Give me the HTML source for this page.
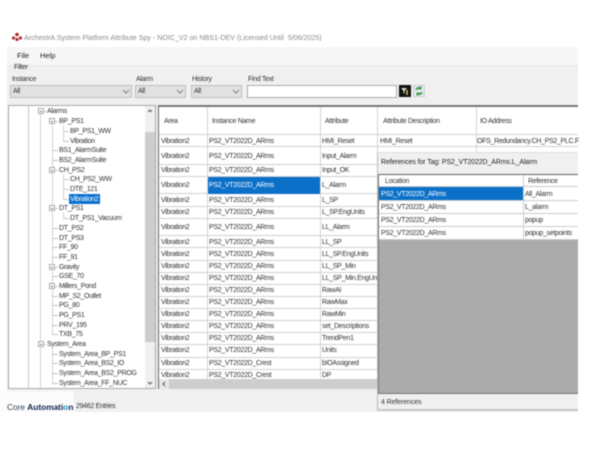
<!DOCTYPE html>
<html><head><meta charset="utf-8"><style>
html,body{margin:0;padding:0;width:600px;height:450px;overflow:hidden;background:#fff}
#r{position:absolute;left:0;top:0;width:600px;height:450px;font:7px/10px "Liberation Sans",sans-serif;letter-spacing:-.3px;color:#333;filter:blur(.4px);overflow:hidden}
#r div{position:absolute;box-sizing:border-box}
.t{white-space:nowrap;margin-top:1px}
.cb{background:#e1e1e1;border:1px solid #bdbdbd;height:13px;padding-left:2px;line-height:12px}
.exp{width:6px;height:6px;border:1px solid #aaa;background:#fff}
.exp:after{content:"";position:absolute;left:1px;top:1.5px;width:2px;height:1px;background:#666}
</style></head><body><div id="r">
<svg style="position:absolute;left:11px;top:32px" width="12" height="10" viewBox="0 0 12 10"><g fill="#b02a35"><circle cx="2.5" cy="6" r="1.6"/><circle cx="6" cy="2.5" r="1.8"/><circle cx="9.5" cy="6" r="1.6"/><circle cx="6" cy="7.5" r="1.6"/></g></svg>
<div class="t" style="left:24px;top:32px;color:#8a8a8a;font-size:7.1px;letter-spacing:0">ArchestrA System Platform Attribute Spy - NOIC_V2 on NBS1-DEV (Licensed Until&nbsp; 5/06/2025)</div>

<div style="left:7px;top:47px;width:571px;height:365px;background:#f0f0f0"></div>
<div style="left:7px;top:47px;width:571px;height:19px;background:#f6f6f6;border-bottom:1px solid #e6e6e6"></div>
<div class="t" style="left:17px;top:50px;font-size:7.5px;letter-spacing:0;color:#222">File</div>
<div class="t" style="left:40px;top:50px;font-size:7.5px;letter-spacing:0;color:#222">Help</div>
<div class="t" style="left:14px;top:62px">Filter</div>
<div class="t" style="left:12px;top:74px">Instance</div>
<div class="t" style="left:136px;top:74px">Alarm</div>
<div class="t" style="left:192px;top:74px">History</div>
<div class="t" style="left:248px;top:74px">Find Text</div>
<div class="cb" style="left:10px;top:85px;width:122px">All</div>
<div class="cb" style="left:135px;top:85px;width:51px">All</div>
<div class="cb" style="left:191px;top:85px;width:51px">All</div>
<svg style="position:absolute;left:0;top:0" width="600" height="450"><g fill="none" stroke="#666" stroke-width=".8"><path d="M123 90l3 3 3-3M177 90l3 3 3-3M233 90l3 3 3-3"/></g></svg>
<div style="left:247px;top:85px;width:150px;height:13px;background:#fff;border:1px solid #aaa"></div>
<div style="left:399px;top:85px;width:12px;height:12px;background:#111"></div>
<svg style="position:absolute;left:399px;top:85px" width="12" height="12"><path d="M2 3h6L5.500 6v3L4.500 8V6z" fill="#ddd"/><path d="M8 5v5" stroke="#cc3" stroke-width="1.500"/></svg>
<div style="left:413px;top:85px;width:12px;height:12px;background:#e4eaf2;border:1px solid #c8d0da"></div>
<svg style="position:absolute;left:413px;top:85px" width="12" height="12" fill="none" stroke="#3a9a3a" stroke-width="1.500"><path d="M3 5a3 3 0 0 1 5-1.500M9 7a3 3 0 0 1-5 1.500"/><path d="M8 1v3H5M4 11V8h3" stroke-width="1"/></svg>

<div style="left:8px;top:105px;width:148px;height:284px;background:#fff;border:1px solid #a8a8a8"></div>
<div style="left:28px;top:106px;width:1px;height:282px;background:#c4c4c4"></div>
<div style="left:40px;top:114px;width:1px;height:227px;background:#d4d4d4"></div>
<div style="left:40px;top:347px;width:1px;height:41px;background:#d4d4d4"></div>
<div style="left:52px;top:124px;width:1px;height:210px;background:#d4d4d4"></div>
<div style="left:52px;top:348px;width:1px;height:36px;background:#d4d4d4"></div>
<div style="left:63px;top:125px;width:1px;height:16px;background:#d4d4d4"></div>
<div style="left:63px;top:174px;width:1px;height:25px;background:#d4d4d4"></div>
<div style="left:63px;top:212px;width:1px;height:6px;background:#d4d4d4"></div>
<svg style="position:absolute;left:0;top:0" width="600" height="450"><path stroke="#c4c4c4" stroke-width="1" d="M52 150.500h6M52 160.500h6M52 228.500h6M52 238.500h6M52 247.500h6M52 257.500h6M52 276.500h6M52 296.500h6M52 305.500h6M52 315.500h6M52 325.500h6M52 334.500h6M52 354.500h6M52 363.500h6M52 373.500h6M52 383.500h6M63 131.500h6M63 141.500h6M63 179.500h6M63 189.500h6M63 199.500h5M63 218.500h6M43 111.500h3M54 121.500h4M54 170.500h4M54 208.500h4M54 267.500h4M54 286.500h4M43 344.500h3"/></svg>
<div class="exp" style="left:38px;top:108px"></div>
<div class="exp" style="left:49px;top:118px"></div>
<div class="exp" style="left:49px;top:167px"></div>
<div class="exp" style="left:49px;top:205px"></div>
<div class="exp" style="left:49px;top:264px"></div>
<div class="exp" style="left:49px;top:283px"></div>
<div class="exp" style="left:38px;top:341px"></div>

<div class="t" style="left:47px;top:106px">Alarms</div>
<div class="t" style="left:59px;top:116px">BP_PS1</div>
<div class="t" style="left:70px;top:126px">BP_PS1_WW</div>
<div class="t" style="left:70px;top:136px">Vibration</div>
<div class="t" style="left:59px;top:145px">BS1_AlarmSuite</div>
<div class="t" style="left:59px;top:155px">BS2_AlarmSuite</div>
<div class="t" style="left:59px;top:165px">CH_PS2</div>
<div class="t" style="left:70px;top:174px">CH_PS2_WW</div>
<div class="t" style="left:70px;top:184px">DTE_121</div>
<div style="left:69px;top:194px;width:31px;height:10px;background:#0a70d0"></div>
<div class="t" style="left:70px;top:194px;color:#fff">Vibration2</div>
<div class="t" style="left:59px;top:203px">DT_PS1</div>
<div class="t" style="left:70px;top:213px">DT_PS1_Vacuum</div>
<div class="t" style="left:59px;top:223px">DT_PS2</div>
<div class="t" style="left:59px;top:233px">DT_PS3</div>
<div class="t" style="left:59px;top:242px">FF_90</div>
<div class="t" style="left:59px;top:252px">FF_91</div>
<div class="t" style="left:59px;top:262px">Gravity</div>
<div class="t" style="left:59px;top:271px">GSE_70</div>
<div class="t" style="left:59px;top:281px">Millers_Pond</div>
<div class="t" style="left:59px;top:291px">MP_S2_Outlet</div>
<div class="t" style="left:59px;top:300px">PG_80</div>
<div class="t" style="left:59px;top:310px">PG_PS1</div>
<div class="t" style="left:59px;top:320px">PRV_195</div>
<div class="t" style="left:59px;top:329px">TXB_75</div>
<div class="t" style="left:47px;top:339px">System_Area</div>
<div class="t" style="left:59px;top:349px">System_Area_BP_PS1</div>
<div class="t" style="left:59px;top:358px">System_Area_BS2_IO</div>
<div class="t" style="left:59px;top:368px">System_Area_BS2_PROG</div>
<div class="t" style="left:59px;top:378px">System_Area_FF_NUC</div>

<div style="left:145px;top:106px;width:10px;height:282px;background:#f0f0f0"></div>
<div style="left:145px;top:132px;width:10px;height:210px;background:#cdcdcd"></div>
<svg style="position:absolute;left:0;top:0" width="600" height="450" fill="none" stroke="#555"><path d="M148 112l2-2 2 2M148 382l2 2 2-2"/></svg>

<div style="left:158px;top:105px;width:420px;height:284px;background:#fff;border-left:1px solid #666;border-top:2px solid #777;border-bottom:1px solid #666"></div>
<div class="t" style="left:164px;top:116px">Area</div>
<div class="t" style="left:212px;top:116px">Instance Name</div>
<div class="t" style="left:325px;top:116px">Attribute</div>
<div class="t" style="left:383px;top:116px">Attribute Description</div>
<div class="t" style="left:480px;top:116px">IO Address</div>
<div style="left:207px;top:107px;width:1px;height:273px;background:#d5d5d5"></div>
<div style="left:320px;top:107px;width:1px;height:273px;background:#d5d5d5"></div>
<div style="left:377px;top:107px;width:1px;height:45px;background:#d5d5d5"></div>
<div style="left:476px;top:107px;width:1px;height:45px;background:#d5d5d5"></div>
<svg style="position:absolute;left:0;top:0" width="600" height="450"><path stroke="#d0d0d0" d="M159 134.500H578M159 146.500H578M159 164.500H378M159 176.500H378M159 193.500H378M159 206.500H378M159 218.500H378M159 235.500H378M159 247.500H378M159 260.500H378M159 272.500H378M159 284.500H378M159 296.500H378M159 308.500H378M159 320.500H378M159 332.500H378M159 344.500H378M159 357.500H378M159 369.500H378"/></svg>
<div style="left:208px;top:177px;width:112px;height:17px;background:#0a70c8"></div>

<div class="t" style="left:161px;top:136px">Vibration2</div><div class="t" style="left:209px;top:136px">PS2_VT2022D_ARms</div><div class="t" style="left:322px;top:136px">HMI_Reset</div><div class="t" style="left:380px;top:136px">HMI_Reset</div><div class="t" style="left:477px;top:136px">OFS_Redundancy.CH_PS2_PLC.F</div>
<div class="t" style="left:161px;top:151px">Vibration2</div><div class="t" style="left:209px;top:151px">PS2_VT2022D_ARms</div><div class="t" style="left:322px;top:151px">Input_Alarm</div>
<div class="t" style="left:161px;top:165px">Vibration2</div><div class="t" style="left:209px;top:165px">PS2_VT2022D_ARms</div><div class="t" style="left:322px;top:165px">Input_OK</div>
<div class="t" style="left:161px;top:180px">Vibration2</div><div class="t" style="left:209px;top:180px;color:#fff">PS2_VT2022D_ARms</div><div class="t" style="left:322px;top:180px">L_Alarm</div>
<div class="t" style="left:161px;top:195px">Vibration2</div><div class="t" style="left:209px;top:195px">PS2_VT2022D_ARms</div><div class="t" style="left:322px;top:195px">L_SP</div>
<div class="t" style="left:161px;top:207px">Vibration2</div><div class="t" style="left:209px;top:207px">PS2_VT2022D_ARms</div><div class="t" style="left:322px;top:207px">L_SP.EngUnits</div>
<div class="t" style="left:161px;top:222px">Vibration2</div><div class="t" style="left:209px;top:222px">PS2_VT2022D_ARms</div><div class="t" style="left:322px;top:222px">LL_Alarm</div>
<div class="t" style="left:161px;top:237px">Vibration2</div><div class="t" style="left:209px;top:237px">PS2_VT2022D_ARms</div><div class="t" style="left:322px;top:237px">LL_SP</div>
<div class="t" style="left:161px;top:249px">Vibration2</div><div class="t" style="left:209px;top:249px">PS2_VT2022D_ARms</div><div class="t" style="left:322px;top:249px">LL_SP.EngUnits</div>
<div class="t" style="left:161px;top:261px">Vibration2</div><div class="t" style="left:209px;top:261px">PS2_VT2022D_ARms</div><div class="t" style="left:322px;top:261px">LL_SP_Min</div>
<div class="t" style="left:161px;top:273px">Vibration2</div><div class="t" style="left:209px;top:273px">PS2_VT2022D_ARms</div><div class="t" style="left:322px;top:273px;width:55px;overflow:hidden">LL_SP_Min.EngUnits</div>
<div class="t" style="left:161px;top:285px">Vibration2</div><div class="t" style="left:209px;top:285px">PS2_VT2022D_ARms</div><div class="t" style="left:322px;top:285px">RawAI</div>
<div class="t" style="left:161px;top:297px">Vibration2</div><div class="t" style="left:209px;top:297px">PS2_VT2022D_ARms</div><div class="t" style="left:322px;top:297px">RawMax</div>
<div class="t" style="left:161px;top:309px">Vibration2</div><div class="t" style="left:209px;top:309px">PS2_VT2022D_ARms</div><div class="t" style="left:322px;top:309px">RawMin</div>
<div class="t" style="left:161px;top:321px">Vibration2</div><div class="t" style="left:209px;top:321px">PS2_VT2022D_ARms</div><div class="t" style="left:322px;top:321px">set_Descriptions</div>
<div class="t" style="left:161px;top:333px">Vibration2</div><div class="t" style="left:209px;top:333px">PS2_VT2022D_ARms</div><div class="t" style="left:322px;top:333px">TrendPen1</div>
<div class="t" style="left:161px;top:345px">Vibration2</div><div class="t" style="left:209px;top:345px">PS2_VT2022D_ARms</div><div class="t" style="left:322px;top:345px">Units</div>
<div class="t" style="left:161px;top:358px">Vibration2</div><div class="t" style="left:209px;top:358px">PS2_VT2022D_Crest</div><div class="t" style="left:322px;top:358px">bIOAssigned</div>
<div class="t" style="left:161px;top:370px">Vibration2</div><div class="t" style="left:209px;top:370px">PS2_VT2022D_Crest</div><div class="t" style="left:322px;top:370px">DP</div>

<div style="left:159px;top:379px;width:419px;height:10px;background:#e6e6e6"></div>
<div style="left:169px;top:379px;width:208px;height:10px;background:#cdcdcd"></div>
<svg style="position:absolute;left:0;top:0" width="600" height="450" fill="none" stroke="#555"><path d="M165 382l-2 2 2 2"/></svg>

<div style="left:377px;top:152px;width:201px;height:259px;background:#f0f0f0;border-left:1px solid #bbb;border-top:1px solid #ddd;border-bottom:2px solid #c8c8c8"></div>
<div class="t" style="left:381px;top:157px;letter-spacing:-.1px;color:#222">References for Tag: PS2_VT2022D_ARms.L_Alarm</div>
<div style="left:378px;top:174px;width:200px;height:220px;background:#ababab;border-top:1px solid #666;border-left:1px solid #777;border-bottom:1px solid #777"></div>
<div style="left:379px;top:175px;width:199px;height:65px;background:#fff"></div>
<div style="left:379px;top:187px;width:144px;height:13px;background:#0a70c8"></div>
<svg style="position:absolute;left:0;top:0" width="600" height="450"><path stroke="#ccc" d="M379 186.500H578M379 200.500H578M379 213.500H578M379 226.500H578M379 239.500H578M523.500 175V240"/></svg>
<div class="t" style="left:385px;top:176px">Location</div>
<div class="t" style="left:528px;top:176px">Reference</div>
<div class="t" style="left:381px;top:189px;color:#fff">PS2_VT2022D_ARms</div><div class="t" style="left:525px;top:189px">All_Alarm</div>
<div class="t" style="left:381px;top:202px">PS2_VT2022D_ARms</div><div class="t" style="left:525px;top:202px">L_alarm</div>
<div class="t" style="left:381px;top:215px">PS2_VT2022D_ARms</div><div class="t" style="left:525px;top:215px">popup</div>
<div class="t" style="left:381px;top:228px">PS2_VT2022D_ARms</div><div class="t" style="left:525px;top:228px">popup_setpoints</div>
<div class="t" style="left:381px;top:397px;letter-spacing:-.1px">4 References</div>

<div style="left:0;top:391px;width:74px;height:21px;background:#fbfbfb"></div>
<div class="t" style="left:7px;top:401px;font-size:8.3px;letter-spacing:0;color:#33415c">Core <b style="color:#10264f">Automati<span style="color:#1e88c8">o</span>n</b></div>
<div class="t" style="left:76px;top:401px">29462 Entries</div>
</div></body></html>
